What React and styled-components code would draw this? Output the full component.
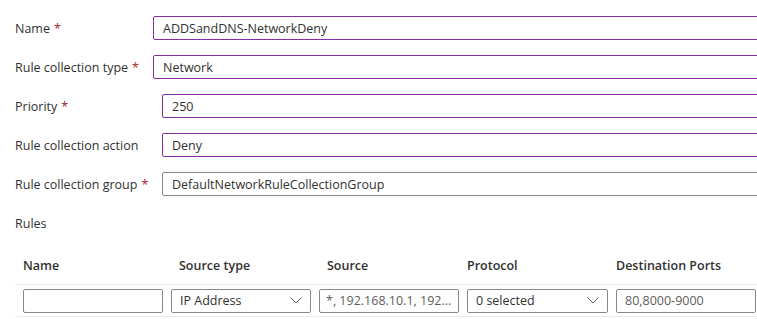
import React from 'react';
import styled, { createGlobalStyle } from 'styled-components';

const GlobalStyle = createGlobalStyle`
  body {
    margin: 0;
    background: #ffffff;
    font-family: "Open Sans", "Noto Sans", sans-serif;
    color: #323130;
    overflow: hidden;
  }
`;

const Page = styled.div`
  width: 757px;
  height: 319px;
  padding-top: 16px;
  box-sizing: border-box;
  overflow: hidden;
`;

const FieldRow = styled.div`
  display: flex;
  align-items: center;
  height: 24px;
  margin-bottom: 15px;
  padding-left: 15px;
`;

const Label = styled.label`
  flex: 0 0 ${p => p.$width}px;
  font-size: 12.5px;
  color: #323130;
  white-space: nowrap;
`;

const Required = styled.span`
  color: #a4262c;
  margin-left: 4px;
`;

const TextBox = styled.div`
  flex: 0 0 auto;
  width: 640px;
  height: 24px;
  box-sizing: border-box;
  border: 1px solid ${p => (p.$active ? '#8a2da5' : '#8a8886')};
  border-radius: 2px;
  display: flex;
  align-items: center;
  padding-left: 9px;
  font-size: 12.5px;
  color: #323130;
  white-space: nowrap;
`;

const SectionTitle = styled.div`
  padding: 4px 0 0 15px;
  font-size: 12.5px;
  height: 18px;
  line-height: 18px;
`;

const Table = styled.div`
  margin-top: 14px;
  margin-left: 15px;
`;

const columns = '148px 148px 148px 149px 1fr';

const HeaderRow = styled.div`
  display: grid;
  grid-template-columns: ${columns};
  height: 37px;
  align-items: center;
  border-bottom: 1px solid #edebe9;
  padding-left: 8px;
`;

const HeadCell = styled.div`
  font-size: 12.5px;
  font-weight: 600;
  color: #323130;
  white-space: nowrap;
  padding-left: ${p => p.$shift || 0}px;
`;

const BodyRow = styled.div`
  display: grid;
  grid-template-columns: ${columns};
  height: 31px;
  align-items: center;
  border-bottom: 1px solid #edebe9;
  padding-left: 8px;
`;

const Cell = styled.div`
  width: ${p => p.$width}px;
  height: 24px;
  box-sizing: border-box;
  border: 1px solid #8a8886;
  border-radius: 2px;
  display: flex;
  align-items: center;
  justify-content: space-between;
  padding: 0 8px 0 ${p => p.$pad || 8}px;
  font-size: 12.5px;
  color: ${p => (p.$muted ? '#605e5c' : '#323130')};
  white-space: nowrap;
  overflow: hidden;
`;

const Chevron = () => (
  <svg width="12" height="7" viewBox="0 0 12 7" fill="none">
    <path d="M0.5 0.5 L6 6 L11.5 0.5" stroke="#605e5c" strokeWidth="1" />
  </svg>
);

const fields = [
  { label: 'Name', required: true, value: 'ADDSandDNS-NetworkDeny', width: 138, active: true },
  { label: 'Rule collection type', required: true, value: 'Network', width: 138, active: true },
  { label: 'Priority', required: true, value: '250', width: 147, active: true },
  { label: 'Rule collection action', required: false, value: 'Deny', width: 147, active: true },
  { label: 'Rule collection group', required: true, value: 'DefaultNetworkRuleCollectionGroup', width: 147, active: false },
];

export default function App() {
  return (
    <Page>
      <GlobalStyle />
      {fields.map(f => (
        <FieldRow key={f.label}>
          <Label $width={f.width}>
            {f.label}
            {f.required && <Required>*</Required>}
          </Label>
          <TextBox $active={f.active}>{f.value}</TextBox>
        </FieldRow>
      ))}
      <SectionTitle>Rules</SectionTitle>
      <Table>
        <HeaderRow>
          <HeadCell>Name</HeadCell>
          <HeadCell $shift={8}>Source type</HeadCell>
          <HeadCell $shift={8}>Source</HeadCell>
          <HeadCell>Protocol</HeadCell>
          <HeadCell>Destination Ports</HeadCell>
        </HeaderRow>
        <BodyRow>
          <Cell $width={140} />
          <Cell $width={140}>
            IP Address
            <Chevron />
          </Cell>
          <Cell $width={140} $muted $pad={6}>*, 192.168.10.1, 192...</Cell>
          <Cell $width={141}>
            0 selected
            <Chevron />
          </Cell>
          <Cell $width={140} $muted>80,8000-9000</Cell>
        </BodyRow>
      </Table>
    </Page>
  );
}
